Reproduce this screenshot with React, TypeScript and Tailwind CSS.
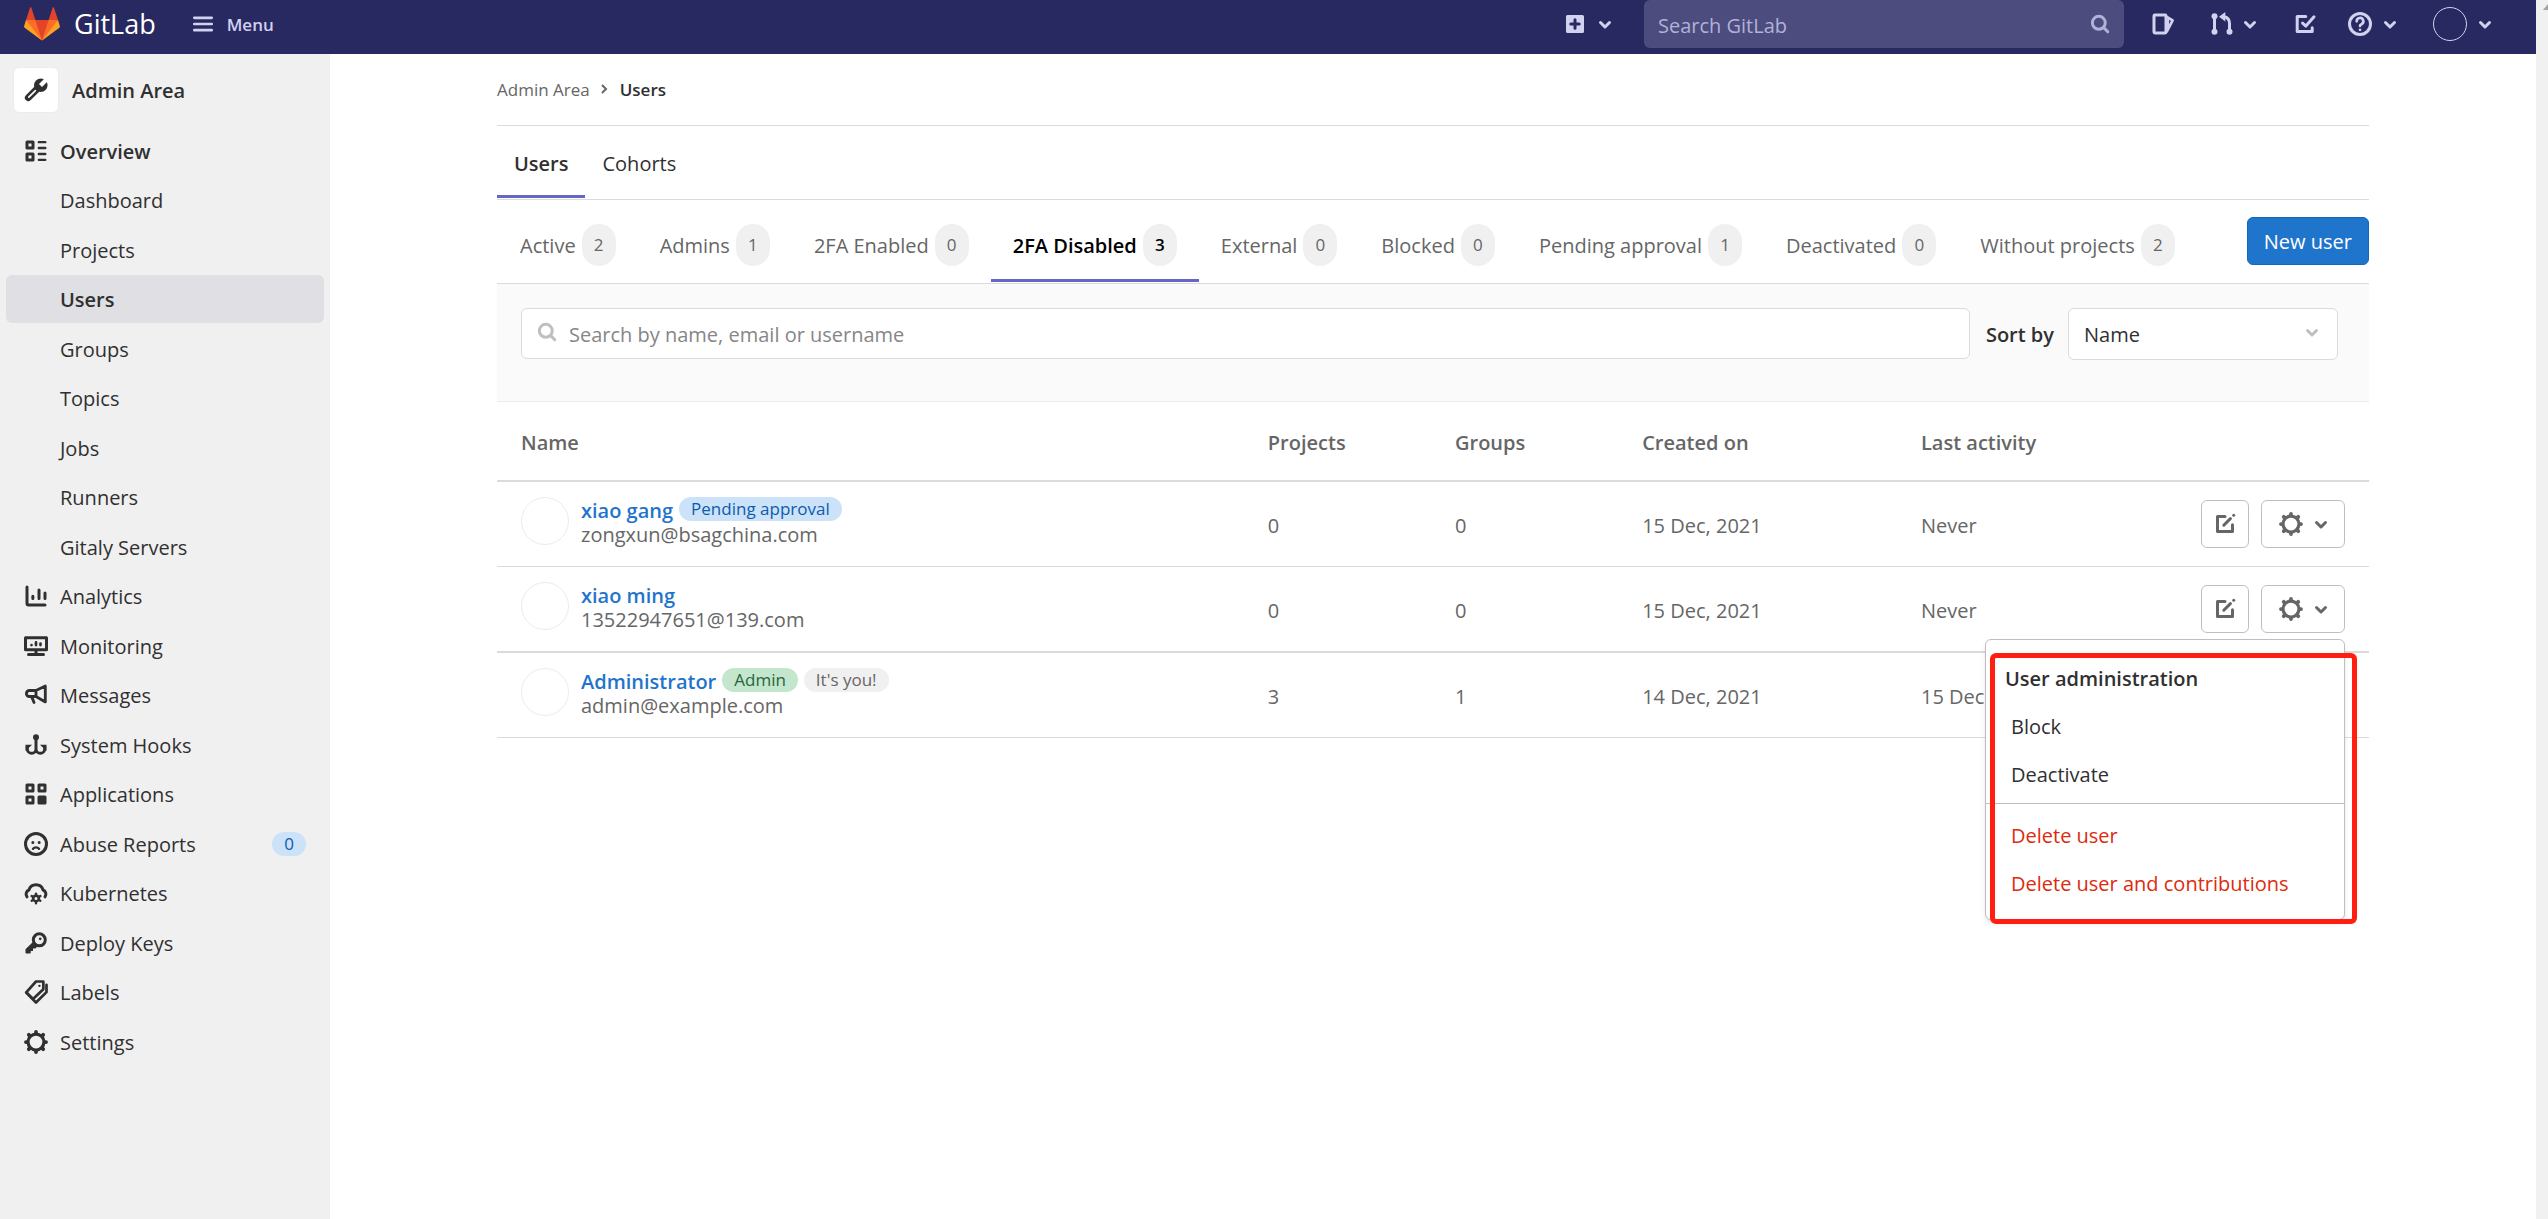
import type { ReactNode } from "react";

type IconProps = { children: ReactNode; className?: string };

// Base for every 16-unit icon
const Icon = ({ children, className = "" }: IconProps) => (
  <svg
    viewBox="0 0 16 16"
    className={`size-6 shrink-0 ${className}`}
    fill="none"
    stroke="currentColor"
    strokeWidth="2"
    strokeLinecap="round"
    strokeLinejoin="round"
    aria-hidden="true"
  >
    {children}
  </svg>
);

const ChevronDown = ({ className }: { className?: string }) => (
  <Icon className={className}>
    <path d="M5 7l3 3 3-3" />
  </Icon>
);

const SearchIcon = ({ className }: { className?: string }) => (
  <Icon className={className}>
    <circle cx="7.2" cy="7.2" r="4.3" />
    <path d="M10.6 10.6L13.2 13.2" />
  </Icon>
);

const GearIcon = () => (
  <Icon>
    <circle cx="8" cy="8" r="5.3" strokeWidth="2.1" />
    <path
      strokeWidth="2.5"
      d="M8 2V1.3M8 14v.7M2 8h-.7M14 8h.7M3.7 3.7l-.5-.5M12.3 3.7l.5-.5M3.7 12.3l-.5.5M12.3 12.3l.5.5"
    />
  </Icon>
);

const EditIcon = () => (
  <Icon>
    <path d="M8 3H3v10h10V8.5" />
    <path d="M7.2 8.8L11.6 4.4" />
    <path d="M13.8 2.2h.01" />
  </Icon>
);

const WrenchIcon = () => (
  <Icon>
    <path strokeWidth="4.6" d="M9.5 6.5L2.9 13.1" />
    <circle cx="11.2" cy="4.9" r="4.5" fill="currentColor" stroke="none" />
    <path stroke="#fff" strokeWidth="2.8" strokeLinecap="butt" d="M11 5L16.5 -.5" />
    <path stroke="#fff" strokeWidth="1.1" d="M7.6 8.4L3.2 12.8" />
  </Icon>
);

const navIcons: Record<string, ReactNode> = {
  Overview: (
    <Icon>
      <path d="M2 2h4v4H2zM2 10h4v4H2z" />
      <path strokeWidth="1.6" d="M9.9 2.1h4.3M9.9 6h4.3M9.9 10h4.3M9.9 13.9h4.3" />
    </Icon>
  ),
  Analytics: (
    <Icon>
      <path d="M2 2v11a1 1 0 0 0 1 1h11" />
      <path d="M5.9 8.2v1.5M10 4v5.7M14 6v3.7" />
    </Icon>
  ),
  Monitoring: (
    <Icon>
      <path d="M1 2.5h14v8H1z" />
      <path d="M8 11v2M3 13.6h10" />
      <path strokeWidth="1.8" d="M5 7.4h.01M8 5.6v1.8M11 6.4v1" />
    </Icon>
  ),
  Messages: (
    <Icon>
      <path strokeWidth="1.9" d="M8 5L14.2 2v10.6L8 9H3.6a2 2 0 0 1 0-4zM8 5v4M5.2 9.4l1.5 3.6" />
    </Icon>
  ),
  "System Hooks": (
    <Icon>
      <circle cx="8" cy="2.8" r="2" fill="currentColor" stroke="none" />
      <path d="M8 3.5V11M2.2 9v1.6a2.9 2.9 0 0 0 5.8 0 2.9 2.9 0 0 0 5.8 0V9" />
      <path stroke="none" fill="currentColor" d="M1 7.8h4.4L1 12zM15 7.8h-4.4L15 12z" />
    </Icon>
  ),
  Applications: (
    <Icon>
      <path d="M2 2h4v4H2zM10 2h4v4h-4zM2 10h4v4H2z" />
      <path fill="currentColor" d="M10 10h4v4h-4z" />
    </Icon>
  ),
  "Abuse Reports": (
    <Icon>
      <circle cx="8" cy="8" r="7" />
      <path d="M5.9 7h.01M10.1 7h.01" />
      <path strokeWidth="1.6" d="M6 11.2a2.6 2.6 0 0 1 4 0" />
    </Icon>
  ),
  Kubernetes: (
    <Icon>
      <path d="M2 10.6A3 3 0 0 1 3.3 6a4.9 4.9 0 0 1 9.4 0A3 3 0 0 1 14 10.6" />
      <circle cx="8" cy="11.6" r="1.9" strokeWidth="1.8" />
      <path strokeWidth="1.6" d="M8 8.6v-.2M8 14.6v.2M5.3 10.1l-.2-.1M10.7 10.1l.2-.1M5.3 13.1l-.2.1M10.7 13.1l.2.1" />
    </Icon>
  ),
  "Deploy Keys": (
    <Icon>
      <circle cx="10.2" cy="5.9" r="4" />
      <path strokeWidth="1.8" d="M10.8 5.2h.01" />
      <path
        stroke="none"
        fill="currentColor"
        d="M5.6 7.6L1 12.2v2.3a.5.5 0 0 0 .5.5H4a.5.5 0 0 0 .5-.5V13.3H6V11.6h1.6l1.3-1.3z"
      />
    </Icon>
  ),
  Labels: (
    <Icon>
      <path strokeWidth="1.8" d="M8 1h4.9v5.1L6 12.6 1.5 8.2z" />
      <path strokeWidth="1.8" d="M15 3.2v4.9L8 15 1.5 8.4" />
      <path strokeWidth="1.6" d="M10.3 3.9h.01" />
    </Icon>
  ),
  Settings: <GearIcon />,
};

type NavItem = { label: string; sub?: boolean; active?: boolean; strong?: boolean; count?: number };

const navItems: NavItem[] = [
  { label: "Overview", strong: true },
  { label: "Dashboard", sub: true },
  { label: "Projects", sub: true },
  { label: "Users", sub: true, active: true, strong: true },
  { label: "Groups", sub: true },
  { label: "Topics", sub: true },
  { label: "Jobs", sub: true },
  { label: "Runners", sub: true },
  { label: "Gitaly Servers", sub: true },
  { label: "Analytics" },
  { label: "Monitoring" },
  { label: "Messages" },
  { label: "System Hooks" },
  { label: "Applications" },
  { label: "Abuse Reports", count: 0 },
  { label: "Kubernetes" },
  { label: "Deploy Keys" },
  { label: "Labels" },
  { label: "Settings" },
];

const filters = [
  { label: "Active", count: 2 },
  { label: "Admins", count: 1 },
  { label: "2FA Enabled", count: 0 },
  { label: "2FA Disabled", count: 3, active: true },
  { label: "External", count: 0 },
  { label: "Blocked", count: 0 },
  { label: "Pending approval", count: 1 },
  { label: "Deactivated", count: 0 },
  { label: "Without projects", count: 2 },
];

type Badge = { text: string; style: string };
type User = {
  name: string;
  email: string;
  badges: Badge[];
  projects: number;
  groups: number;
  created: string;
  activity: string;
  actions?: boolean;
  menuOpen?: boolean;
  line: string;
};

const users: User[] = [
  {
    name: "xiao gang",
    email: "zongxun@bsagchina.com",
    badges: [{ text: "Pending approval", style: "bg-[#cbe2f9] text-[#0b5cad]" }],
    projects: 0,
    groups: 0,
    created: "15 Dec, 2021",
    activity: "Never",
    actions: true,
    line: "h-[85px] border-b",
  },
  {
    name: "xiao ming",
    email: "13522947651@139.com",
    badges: [],
    projects: 0,
    groups: 0,
    created: "15 Dec, 2021",
    activity: "Never",
    actions: true,
    menuOpen: true,
    line: "h-[86px] border-b-2",
  },
  {
    name: "Administrator",
    email: "admin@example.com",
    badges: [
      { text: "Admin", style: "bg-[#c3e6cd] text-[#24663b]" },
      { text: "It's you!", style: "bg-[#f0f0f0] text-[#666]" },
    ],
    projects: 3,
    groups: 1,
    created: "14 Dec, 2021",
    activity: "15 Dec, 2021",
    line: "h-[85px] border-b",
  },
];

const Logo = () => (
  <svg viewBox="0 0 36 36" className="size-9" aria-hidden="true">
    <path fill="#e24329" d="M2 14l9.38 9v-9l-4-12.28c-.205-.632-1.176-.632-1.38 0z" />
    <path fill="#e24329" d="M34 14l-9.38 9v-9l4-12.28c.205-.632 1.176-.632 1.38 0z" />
    <path fill="#e24329" d="M18 34.38L3 14h30z" />
    <path fill="#fc6d26" d="M18 34.38L11.38 14H2l4 11z" />
    <path fill="#fc6d26" d="M18 34.38L24.62 14H34l-4 11z" />
    <path fill="#fca326" d="M2 14L.1 20.16c-.18.565 0 1.2.5 1.56L18 34.38z" />
    <path fill="#fca326" d="M34 14l1.9 6.16c.18.565 0 1.2-.5 1.56L18 34.38z" />
  </svg>
);

const Header = () => (
  <header className="flex h-[54px] items-start bg-[#292961] pr-[39px] pl-6 text-[#d1d1f0]">
    <a href="#home" className="flex h-12 items-center gap-3.5 text-[27px] text-white">
      <Logo />
      <span>GitLab</span>
    </a>
    <button type="button" className="ml-[35px] flex h-12 items-center gap-3 text-[17px] font-semibold">
      <Icon>
        <path strokeWidth="1.8" d="M2.2 3.9h11.6M2.2 8h11.6M2.2 12.1h11.6" />
      </Icon>
      <span className="pt-0.5">Menu</span>
    </button>

    <button type="button" aria-label="Create new" className="ml-auto flex h-12 items-center gap-1.5">
      <Icon>
        <rect x="3" y="3" width="10" height="10" fill="currentColor" />
        <path stroke="#292961" d="M8 5.2v5.6M5.2 8h5.6" />
      </Icon>
      <ChevronDown />
    </button>
    <div className="relative mx-[27px] w-[480px]">
      <input
        type="text"
        aria-label="Search GitLab"
        placeholder="Search GitLab"
        className="block h-12 w-full rounded-md bg-[#4c4c7e] pt-0.5 pr-12 pl-3.5 text-[20px] outline-none placeholder:text-[#b1b1d9]"
      />
      <SearchIcon className="pointer-events-none absolute top-3 right-3 text-[#b1b1d9]" />
    </div>
    <div className="flex h-12 items-center gap-[31px]">
      <a href="#issues" aria-label="Issues">
        <Icon>
          <rect x="2" y="2" width="8" height="12" rx=".6" />
          <path strokeWidth="1.8" d="M10.5 3.2L14.4 5.6 10.6 13M11.2 5.5v4.5" />
        </Icon>
      </a>
      <button type="button" aria-label="Merge requests" className="ml-1 flex gap-1">
        <Icon>
          <path d="M3 3v10M13 13V7.5a4.5 4.5 0 0 0-3.4-4.3" />
          <g fill="currentColor" stroke="none">
            <circle cx="3" cy="2.9" r="2" />
            <circle cx="3" cy="13.1" r="2" />
            <circle cx="13" cy="13.1" r="2" />
            <path d="M6 3.2L10.2 0v6.4z" />
          </g>
        </Icon>
        <ChevronDown />
      </button>
      <a href="#todos" aria-label="To-Do List">
        <Icon>
          <path d="M8.5 3H2.8v10h10v-2.5" />
          <path d="M6.4 7.4l2.2 2L14 3.2" />
        </Icon>
      </a>
      <button type="button" aria-label="Help" className="flex gap-1.5">
        <Icon>
          <circle cx="8" cy="8" r="7" />
          <path strokeWidth="1.8" d="M5.8 6.2a2.2 2.2 0 1 1 3.3 1.9c-.7.4-1.1.6-1.1 1.2M8 11.9h.01" />
        </Icon>
        <ChevronDown />
      </button>
      <button type="button" aria-label="Account" className="flex items-center gap-1.5">
        <span className="size-[34px] rounded-full border border-[#d1d1f0]" />
        <ChevronDown />
      </button>
    </div>
  </header>
);

const Sidebar = () => (
  <aside className="w-[330px] shrink-0 bg-[#f0f0f0] px-1.5 pt-[13px] text-[20px] text-[#303030]">
    <a href="#admin" className="flex items-center gap-[13px] pl-[7px] font-semibold">
      <span className="flex size-[46px] items-center justify-center rounded-md border border-[#ececec] bg-white">
        <WrenchIcon />
      </span>
      <span className="pt-0.5">Admin Area</span>
    </a>
    <ul className="mt-3.5">
      {navItems.map((item) => (
        <li key={item.label} className="odd:mb-px even:mb-0.5">
          <a
            href="#nav"
            className={`flex h-12 items-center gap-3 rounded-md pr-[18px] ${item.sub ? "pl-[54px]" : "pl-[18px]"} ${
              item.active ? "bg-[#dfdfe4]" : ""
            } ${item.strong ? "font-semibold" : ""}`}
          >
            {!item.sub && navIcons[item.label]}
            <span className="pt-0.5">{item.label}</span>
            {item.count !== undefined && (
              <span className="ml-auto flex h-6 items-center rounded-full bg-[#cbe2f9] px-3 text-[17px] text-[#0b5cad]">
                {item.count}
              </span>
            )}
          </a>
        </li>
      ))}
    </ul>
  </aside>
);

const UserMenu = () => (
  <div className="absolute top-full right-0 z-10 mt-1.5 w-[360px] rounded-md border border-[#bfbfbf] bg-white pt-[15px] pb-[11px] text-left text-[20px] text-[#303030] shadow-md">
    <p className="flex h-12 items-center pl-[19px] font-semibold">User administration</p>
    <button type="button" className="flex h-12 w-full items-center pl-[25px]">
      Block
    </button>
    <button type="button" className="flex h-12 w-full items-center pl-[25px]">
      Deactivate
    </button>
    <hr className="mt-1 mb-2 border-[#bfbfbf]" />
    <button type="button" className="flex h-12 w-full items-center pl-[25px] text-[#dd2b0e]">
      Delete user
    </button>
    <button type="button" className="flex h-12 w-full items-center pl-[25px] text-[#dd2b0e]">
      Delete user and contributions
    </button>
    {/* Red highlight around the options */}
    <span className="pointer-events-none absolute top-[13px] -right-[13px] -bottom-[5px] left-1 rounded-md border-[5px] border-[#ff1e10]" />
  </div>
);

const UserRow = ({ user }: { user: User }) => {
  const cell = `${user.line} border-[#dbdbdb] pt-[3px]`;

  return (
    <tr>
      <td className={`${user.line} border-[#dbdbdb] pt-[15px] pl-6 align-top`}>
        <div className="flex items-start gap-3">
          <span className="size-12 shrink-0 rounded-full border border-[#ececec]" />
          <div>
            <div className="flex h-6 gap-1.5">
              <a href="#user" className="leading-[28px] font-semibold text-[#1f75cb]">
                {user.name}
              </a>
              {user.badges.map((badge) => (
                <span
                  key={badge.text}
                  className={`flex h-6 items-center rounded-full px-3 text-[17px] whitespace-nowrap ${badge.style}`}
                >
                  {badge.text}
                </span>
              ))}
            </div>
            <div className="leading-[28px]">{user.email}</div>
          </div>
        </div>
      </td>
      <td className={`${cell} pl-[22px]`}>{user.projects}</td>
      <td className={`${cell} pl-[22px]`}>{user.groups}</td>
      <td className={`${cell} pl-[22px]`}>{user.created}</td>
      <td className={`${cell} pl-5 whitespace-nowrap`}>{user.activity}</td>
      <td className={`${user.line} border-[#dbdbdb] pr-6`}>
        {user.actions && (
          <div className="flex justify-end gap-3">
            <button
              type="button"
              aria-label="Edit"
              className="flex size-12 items-center justify-center rounded-md border border-[#bfbfbf]"
            >
              <EditIcon />
            </button>
            <div className="relative">
              <button
                type="button"
                aria-label="User administration"
                className="flex h-12 w-[84px] items-center justify-center gap-1.5 rounded-md border border-[#bfbfbf] pl-1.5"
              >
                <GearIcon />
                <ChevronDown />
              </button>
              {user.menuOpen && <UserMenu />}
            </div>
          </div>
        )}
      </td>
    </tr>
  );
};

const UsersTable = () => (
  <table className="w-full table-fixed border-separate border-spacing-0 text-left text-[20px] text-[#666]">
    <thead>
      <tr className="[&>th]:h-20 [&>th]:border-b-2 [&>th]:border-[#dbdbdb] [&>th]:pt-[3px] [&>th]:font-semibold">
        <th className="w-2/5 pl-6">Name</th>
        <th className="w-1/10 pl-[22px]">Projects</th>
        <th className="w-1/10 pl-[22px]">Groups</th>
        <th className="w-3/20 pl-[22px]">Created on</th>
        <th className="w-3/20 pl-5">Last activity</th>
        <th className="w-1/10" aria-label="Actions" />
      </tr>
    </thead>
    <tbody>
      {users.map((user) => (
        <UserRow key={user.name} user={user} />
      ))}
    </tbody>
  </table>
);

const FilterTabs = () => (
  <div className="flex h-[84px] justify-between border-b border-[#dbdbdb]">
    <nav className="flex pb-px pl-px">
      {filters.map((filter) => (
        <a
          key={filter.label}
          href="#filter"
          className={`flex items-center gap-1.5 border-b-[3px] px-[22px] pt-2.5 whitespace-nowrap ${
            filter.active ? "border-[#6666c4] font-semibold text-black" : "border-transparent text-[#666]"
          }`}
        >
          <span className="pt-[3px]">{filter.label}</span>
          <span className="flex h-[42px] w-[34px] items-center justify-center rounded-full bg-[#f0f0f0] text-[17px]">
            {filter.count}
          </span>
        </a>
      ))}
    </nav>
    <button
      type="button"
      className="mt-[17px] h-12 rounded-md border border-[#1068bf] bg-[#1f75cb] px-4 pt-0.5 font-medium text-white"
    >
      New user
    </button>
  </div>
);

const FilterBar = () => (
  <div className="flex h-[118px] items-start border-b border-[#ececec] bg-[#fafafa] pt-6 pr-[31px] pl-6">
    <div className="relative flex-1">
      <SearchIcon className="pointer-events-none absolute top-3 left-3.5 text-[#bfbfbf]" />
      <input
        type="text"
        aria-label="Search by name, email or username"
        placeholder="Search by name, email or username"
        className="block h-[51px] w-full rounded-md border border-[#dbdbdb] bg-white pt-0.5 pl-[47px] outline-none placeholder:text-[#868686]"
      />
    </div>
    <label htmlFor="sort" className="pr-3.5 pl-4 leading-[54px] font-semibold text-[#303030]">
      Sort by
    </label>
    <div className="relative w-[270px]">
      <select
        id="sort"
        className="block h-[52px] w-full appearance-none rounded-md border border-[#dbdbdb] bg-white pt-0.5 pl-[15px] text-[#303030]"
      >
        <option>Name</option>
      </select>
      <ChevronDown className="pointer-events-none absolute top-3 right-3.5 text-[#bfbfbf]" />
    </div>
  </div>
);

export default function App() {
  return (
    <div className="flex min-h-screen bg-white font-['Open_Sans','Noto_Sans',sans-serif]">
      <div className="flex min-w-0 flex-1 flex-col">
        <Header />
        <div className="flex flex-1">
          <Sidebar />
          <main className="min-w-0 flex-1 px-6 text-[20px]">
            <div className="mx-auto max-w-[1872px]">
              <nav className="flex h-[72px] items-center border-b border-[#dbdbdb] text-[17px] text-[#666]">
                <a href="#admin">Admin Area</a>
                <svg
                  viewBox="0 0 24 24"
                  className="mr-1 ml-0.5 size-6"
                  fill="none"
                  stroke="currentColor"
                  strokeWidth="2"
                  aria-hidden="true"
                >
                  <path d="M10 7l4 4-4 4" />
                </svg>
                <a href="#users" className="font-semibold text-[#303030]">
                  Users
                </a>
              </nav>
              <nav className="flex h-[74px] border-b border-[#dbdbdb] pb-px text-[#303030]">
                <a href="#users" className="flex items-center border-b-[3px] border-[#6666c4] px-[17px] pt-1.5 font-semibold">
                  Users
                </a>
                <a href="#cohorts" className="flex items-center border-b-[3px] border-transparent px-[17px] pt-1.5">
                  Cohorts
                </a>
              </nav>
              <FilterTabs />
              <FilterBar />
              <UsersTable />
            </div>
          </main>
        </div>
      </div>
      {/* Scroll track */}
      <div className="w-3 shrink-0 overflow-hidden bg-[#f1f1f1]">
        <svg viewBox="0 0 12 12" className="size-3" aria-hidden="true">
          <path d="M7 10l5-6v6z" fill="#a3a3a3" />
        </svg>
      </div>
    </div>
  );
}
